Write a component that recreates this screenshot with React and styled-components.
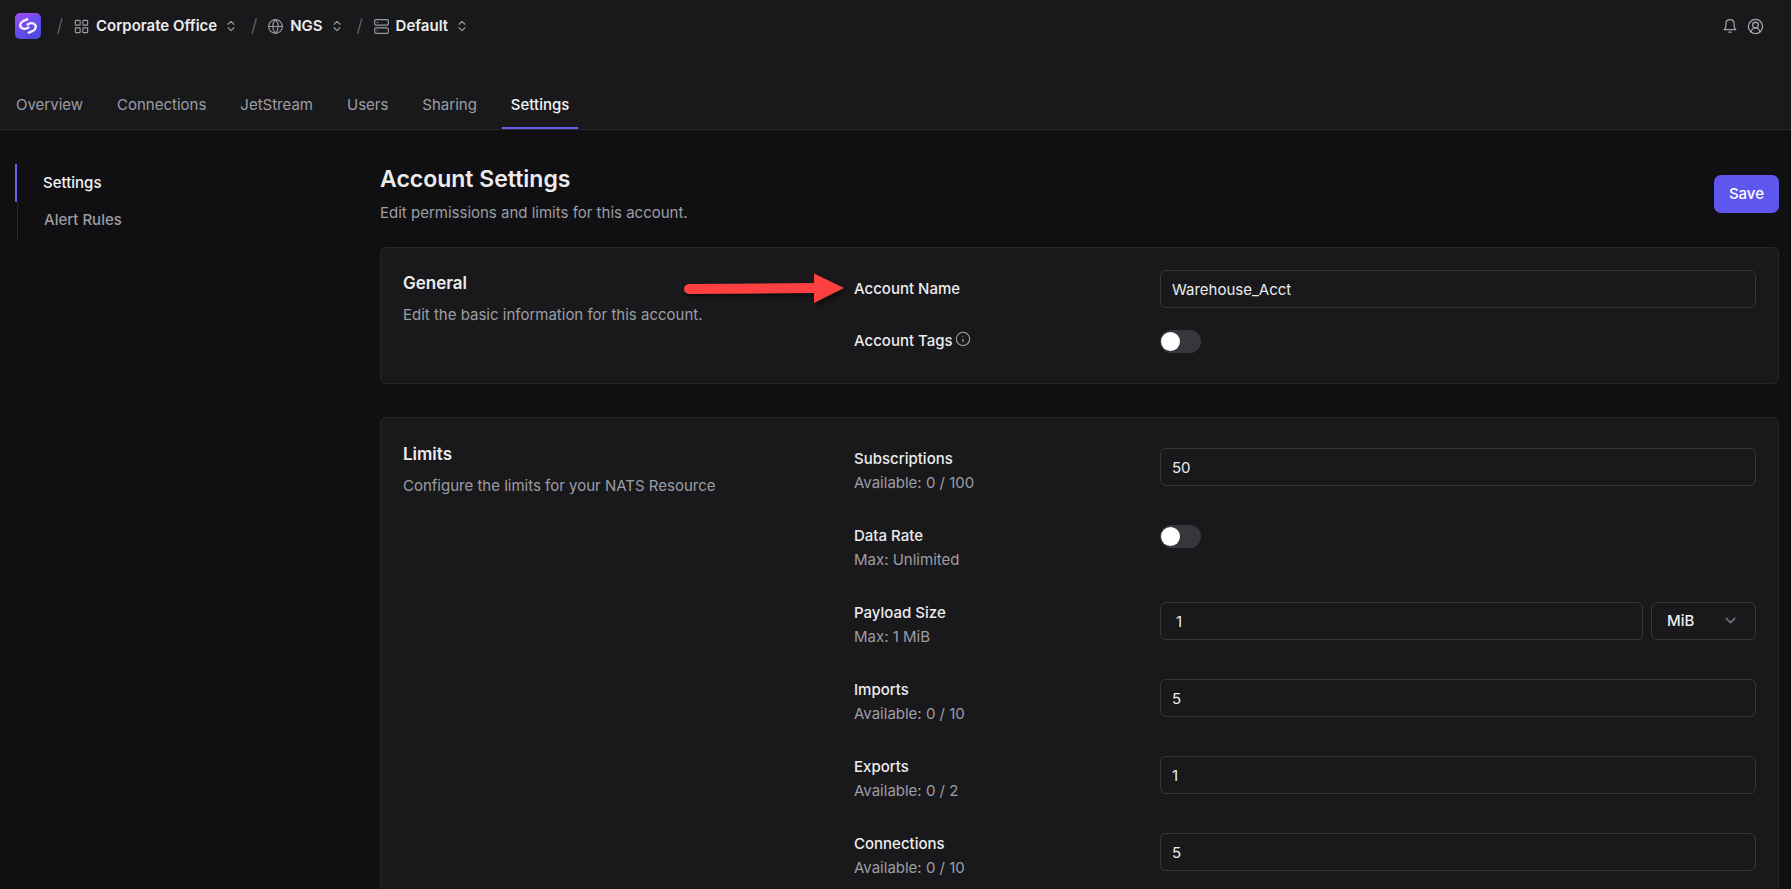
import React from "react";
import styled, { createGlobalStyle, css } from "styled-components";
import { ChevronDown, ChevronsUpDown, CircleUserRound, Globe, Info, LayoutGrid, Server } from "lucide-react";

const GlobalStyle = createGlobalStyle`
  *, *::before, *::after { box-sizing: border-box; }
  html, body, #root { height: 100%; }
  body {
    margin: 0;
    background: #101012;
    color: #ececee;
    font-family: Inter, "Liberation Sans", sans-serif;
    font-size: 15px;
    line-height: 24px;
  }
  h1, h2, p, ul { margin: 0; padding: 0; }
  button, input, select { font: inherit; color: inherit; }
  a { color: inherit; text-decoration: none; }
`;

const Page = styled.div`
  height: 100%;
  display: flex;
  flex-direction: column;
  overflow: hidden;
`;

const Header = styled.header`
  flex: none;
  background: #19191b;
  border-bottom: 1px solid #2a2a2e;
`;

const TopBar = styled.div`
  display: flex;
  align-items: center;
  justify-content: space-between;
  height: 52px;
  padding: 0 27px 0 15px;
`;

const Crumbs = styled.nav`
  display: flex;
  align-items: center;
`;

const HomeLink = styled.a`
  display: block;
  width: 26px;
  height: 26px;
  margin-right: 14px;
  svg { display: block; }
`;

const Slash = styled.span`
  width: 10px;
  margin-right: 9px;
  color: #6b6b74;
  font-size: 18px;
  font-weight: 300;
  text-align: center;
`;

const Crumb = styled.button`
  display: flex;
  align-items: center;
  gap: 7px;
  margin-right: 11px;
  padding: 0;
  border: 0;
  background: none;
  font-weight: 600;
  svg { color: #9a9aa3; }
`;

const Actions = styled.div`
  display: flex;
  align-items: center;
  gap: 10px;
`;

const IconButton = styled.button`
  display: flex;
  padding: 0;
  border: 0;
  background: none;
  color: #a5a5ad;
`;

const Tabs = styled.nav`
  display: flex;
  gap: 16px;
  margin-top: 29px;
  padding: 0 7px;
`;

const Tab = styled.a`
  height: 48px;
  padding: 12px 9px 0;
  border-bottom: 2px solid transparent;
  color: #9d9da6;
  ${(p) => p.$active && css`
    color: #f4f4f5;
    font-weight: 500;
    border-color: #6360ee;
  `}
`;

const Body = styled.div`
  flex: 1;
  min-height: 0;
  display: flex;
  padding: 34px 12px 0 15px;
`;

const SideNav = styled.nav`
  flex: 0 0 365px;
`;

const SideLink = styled.a`
  display: block;
  width: 240px;
  height: 38px;
  padding: 7px 0 7px 26px;
  border-left: 2px solid #6360ee;
  font-weight: 500;
  color: #f4f4f5;
  ${(p) => !p.$active && css`
    margin-left: 2px;
    border-left: 1px solid #2a2a2e;
    color: #9d9da6;
    padding-top: 6px;
  `}
`;

const Main = styled.main`
  flex: 1;
  min-width: 0;
`;

const PageHead = styled.div`
  display: flex;
  justify-content: space-between;
  align-items: center;
  height: 60px;
  margin-bottom: 23px;
`;

const Title = styled.h1`
  font-size: 23px;
  line-height: 30px;
  font-weight: 600;
`;

const Muted = styled.p`
  color: #9d9da6;
`;

const TitleNote = styled(Muted)`
  margin-top: 7px;
`;

const SaveButton = styled.button`
  height: 38px;
  padding: 0 15px;
  border: 0;
  border-radius: 7px;
  background: #5f56ee;
  color: #fff;
  font-weight: 500;
`;

const Card = styled.section`
  display: grid;
  grid-template-columns: 1fr 2fr;
  margin-bottom: 33px;
  padding: ${(p) => (p.$tall ? "23px 22px" : "22px 22px 30px")};
  background: #19191b;
  border: 1px solid #27272a;
  border-radius: 6px;
`;

const Intro = styled.div`
  padding-top: 1px;
`;

const CardTitle = styled.h2`
  margin-bottom: 8px;
  font-size: 17px;
  line-height: 24px;
  font-weight: 600;
`;

const Fields = styled.div`
  display: flex;
  flex-direction: column;
  gap: ${(p) => (p.$tall ? "29px" : "21px")};
  padding-top: ${(p) => (p.$tall ? "6px" : "0")};
`;

const Field = styled.div`
  display: grid;
  grid-template-columns: 1fr 2fr;
  column-gap: 8px;
  align-items: ${(p) => (p.$center ? "center" : "start")};
`;

const Label = styled.label`
  display: block;
  font-weight: 500;
`;

const Hint = styled.span`
  display: block;
  color: #9d9da6;
`;

const LabelLine = styled.div`
  display: flex;
  gap: 2px;
  svg { margin-top: 2px; color: #a5a5ad; }
`;

const Control = styled.div`
  display: flex;
  gap: 8px;
  padding-top: 1px;
`;

const Input = styled.input`
  display: block;
  width: 100%;
  min-width: 0;
  height: 38px;
  padding: 0 ${(p) => (p.$inset ? "15px" : "11px")};
  border: 1px solid #36363b;
  border-radius: 6px;
  background: transparent;
  outline: 0;
`;

const SelectWrap = styled.div`
  position: relative;
  flex: 0 0 105px;
  svg {
    position: absolute;
    right: 17px;
    top: 10px;
    color: #777780;
    pointer-events: none;
  }
`;

const Select = styled.select`
  appearance: none;
  width: 100%;
  height: 38px;
  padding: 0 15px;
  border: 1px solid #36363b;
  border-radius: 6px;
  background: transparent;
  font-weight: 500;
`;

const Switch = styled.input`
  appearance: none;
  display: block;
  width: 41px;
  height: 23px;
  margin: 0;
  padding: 2px 1px;
  border-radius: 12px;
  background: #36363d;
  &::before {
    content: "";
    display: block;
    width: 19px;
    height: 19px;
    border-radius: 50%;
    background: #fff;
  }
  &:checked { background: #5f56ee; }
  &:checked::before { margin-left: 20px; }
`;

const Pointed = styled.div`
  position: relative;
`;

const Pointer = styled.svg`
  position: absolute;
  right: 100%;
  top: -8px;
  overflow: visible;
  pointer-events: none;
  filter: drop-shadow(2px 3px 2px rgba(0, 0, 0, 0.5));
`;

function Logo() {
  return (
    <svg width="26" height="26" viewBox="0 0 26 26" aria-hidden="true">
      <defs>
        <linearGradient id="logo-fill" x1="0" y1="0" x2="0.6" y2="1">
          <stop offset="0" stopColor="#a44df2" />
          <stop offset="0.5" stopColor="#6d4df0" />
          <stop offset="1" stopColor="#4f4ae0" />
        </linearGradient>
      </defs>
      <rect width="26" height="26" rx="5" fill="url(#logo-fill)" />
      <g fill="none" stroke="#f3efff" strokeWidth="2.4" strokeLinecap="round" strokeLinejoin="round">
        <path d="M12.200 6.300L8 8.200C4.600 9.900 4.300 13.600 7.200 15.300C9.600 16.700 11.300 15.600 13.400 14.600" />
        <path d="M13.800 19.700L18 17.800C21.400 16.100 21.700 12.400 18.800 10.700C16.400 9.300 14.700 10.400 12.600 11.400" />
      </g>
    </svg>
  );
}

function Bell() {
  return (
    <svg width="14" height="14" viewBox="0 0 14 14" fill="none" stroke="currentColor" strokeWidth="1.2" strokeLinejoin="round" strokeLinecap="round" aria-hidden="true">
      <path d="M1.2 10.600C2.500 9.600 2.900 8.600 2.900 7V4.800C2.900 2.400 4.700 0.700 7 0.700S11.100 2.400 11.100 4.800V7C11.100 8.600 11.500 9.600 12.800 10.600Z" />
      <path d="M5.900 13.200H8.100" />
    </svg>
  );
}

const crumbs = [
  ["Corporate Office", LayoutGrid],
  ["NGS", Globe],
  ["Default", Server],
];

const tabs = ["Overview", "Connections", "JetStream", "Users", "Sharing", "Settings"];

const limits = [
  { id: "subscriptions", label: "Subscriptions", hint: "Available: 0 / 100", value: "50" },
  { id: "data-rate", label: "Data Rate", hint: "Max: Unlimited", toggle: true },
  { id: "payload", label: "Payload Size", hint: "Max: 1 MiB", value: "1", unit: true },
  { id: "imports", label: "Imports", hint: "Available: 0 / 10", value: "5" },
  { id: "exports", label: "Exports", hint: "Available: 0 / 2", value: "1" },
  { id: "connections", label: "Connections", hint: "Available: 0 / 10", value: "5" },
];

function LimitControl({ item }) {
  if (item.toggle) return <Switch type="checkbox" role="switch" id={item.id} />;
  return (
    <>
      <Input id={item.id} defaultValue={item.value} $inset={item.unit} />
      {item.unit && (
        <SelectWrap>
          <Select aria-label="Payload unit" defaultValue="MiB">
            <option>KiB</option>
            <option>MiB</option>
          </Select>
          <ChevronDown size={17} strokeWidth={2} />
        </SelectWrap>
      )}
    </>
  );
}

export default function App() {
  return (
    <Page>
      <GlobalStyle />
      <Header>
        <TopBar>
          <Crumbs aria-label="Breadcrumb">
            <HomeLink href="#" aria-label="Home"><Logo /></HomeLink>
            {crumbs.map(([name, Icon]) => (
              <React.Fragment key={name}>
                <Slash>/</Slash>
                <Crumb type="button">
                  <Icon size={15} strokeWidth={1.7} viewBox="1 1 22 22" />
                  {name}
                  <ChevronsUpDown size={14} strokeWidth={2} />
                </Crumb>
              </React.Fragment>
            ))}
          </Crumbs>
          <Actions>
            <IconButton type="button" aria-label="Notifications"><Bell /></IconButton>
            <IconButton type="button" aria-label="Profile"><CircleUserRound size={17} strokeWidth={1.8} /></IconButton>
          </Actions>
        </TopBar>
        <Tabs>
          {tabs.map((t) => (
            <Tab key={t} href="#" $active={t === "Settings"}>{t}</Tab>
          ))}
        </Tabs>
      </Header>
      <Body>
        <SideNav>
          <SideLink href="#" $active>Settings</SideLink>
          <SideLink href="#">Alert Rules</SideLink>
        </SideNav>
        <Main>
          <PageHead>
            <div>
              <Title>Account Settings</Title>
              <TitleNote>Edit permissions and limits for this account.</TitleNote>
            </div>
            <SaveButton type="button">Save</SaveButton>
          </PageHead>
          <Card>
            <Intro>
              <CardTitle>General</CardTitle>
              <Muted>Edit the basic information for this account.</Muted>
            </Intro>
            <Fields>
              <Field $center>
                <Pointed>
                  <Label htmlFor="account-name">Account Name</Label>
                  <Pointer width="170" height="40" viewBox="0 0 170 40" aria-hidden="true">
                    <path d="M5 20L134 19" stroke="#fe4040" strokeWidth="10" strokeLinecap="round" />
                    <path d="M130 4.500L160 19L130 34Z" fill="#fe4040" />
                  </Pointer>
                </Pointed>
                <Input id="account-name" defaultValue="Warehouse_Acct" />
              </Field>
              <Field $center>
                <LabelLine>
                  <Label htmlFor="account-tags">Account Tags</Label>
                  <Info size={16} strokeWidth={1.6} />
                </LabelLine>
                <Switch type="checkbox" role="switch" id="account-tags" />
              </Field>
            </Fields>
          </Card>
          <Card $tall>
            <Intro>
              <CardTitle>Limits</CardTitle>
              <Muted>Configure the limits for your NATS Resource</Muted>
            </Intro>
            <Fields $tall>
              {limits.map((item) => (
                <Field key={item.id}>
                  <div>
                    <Label htmlFor={item.id}>{item.label}</Label>
                    <Hint>{item.hint}</Hint>
                  </div>
                  <Control>
                    <LimitControl item={item} />
                  </Control>
                </Field>
              ))}
            </Fields>
          </Card>
        </Main>
      </Body>
    </Page>
  );
}
